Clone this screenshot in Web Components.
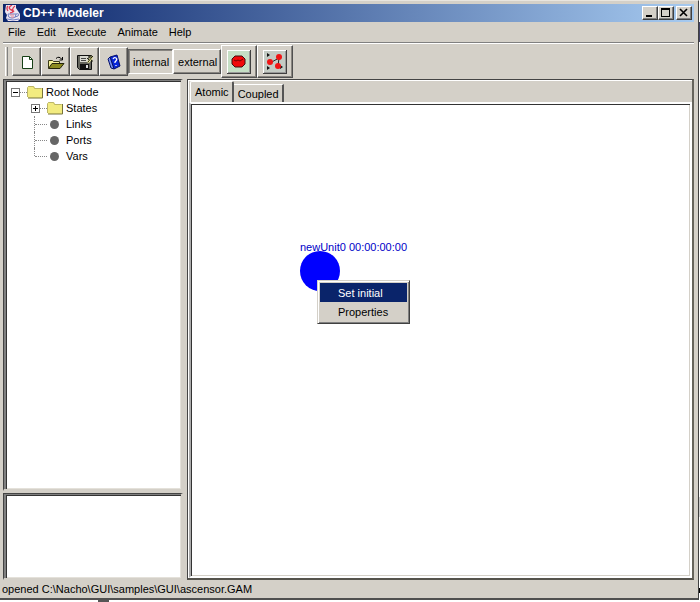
<!DOCTYPE html>
<html lang="en">
<head>
<meta charset="utf-8">
<title>CD++ Modeler</title>
<style>
html, body { margin: 0; height: 100%; }
body { background: linear-gradient(#555, #555) 98px 100% / 11px 2px no-repeat, linear-gradient(#446, #446) 100% 22px / 1px 20px no-repeat, linear-gradient(#ccc, #ccc) 100% 497px / 1px 20px no-repeat, linear-gradient(#000, #000) 100% 588px / 1px 5px no-repeat, #fff;
  color: #000; font: 11px/16px "Liberation Sans", Arial, sans-serif; overflow: hidden; }
</style>
</head>
<body>
<modeler-window>
  <title-bar slot="title">CD++ Modeler</title-bar>
  <menu-bar slot="menu"></menu-bar>
  <tool-bar slot="tools"></tool-bar>
  <node-tree slot="tree"></node-tree>
  <tab-view slot="main">
    <model-canvas></model-canvas>
  </tab-view>
  <span slot="status">opened C:\Nacho\GUI\samples\GUI\ascensor.GAM</span>
</modeler-window>
<script>
function define(name, markup) {
  const template = document.createElement('template');
  template.innerHTML = markup;
  customElements.define(name, class extends HTMLElement {
    constructor() {
      super();
      this.attachShadow({ mode: 'open' }).append(template.content.cloneNode(true));
    }
  });
}

define('modeler-window', `
<style>
:host { display: flex; flex-direction: column; box-sizing: border-box; height: calc(100vh - 2px); margin-right: 1px;
  padding: 3px 4px 0 3px; background: #d4d0c8; border-top: 1px solid #e8e5df; border-right: 1px solid #404040; border-bottom: 2px solid #505050; }
.split { flex: 1; min-height: 0; display: grid; grid-template-columns: 180px minmax(0, 1fr); column-gap: 4px; }
.left { display: grid; grid-template-rows: minmax(0, 1fr) 87px; row-gap: 2px; }
.well { box-sizing: border-box; background: #fff; border: solid; border-width: 1px 2px 2px 1px; border-color: #444 #d4d0c8 #d4d0c8 #444;
  box-shadow: inset 2px 1px #808080, inset 3px 2px #333, inset -1px -1px #e4e1da; overflow: hidden; }
.status { height: 17px; margin: 1px 0 0 -1px; line-height: 16px; }
</style>
<slot name="title"></slot><slot name="menu"></slot><slot name="tools"></slot>
<div class="split">
  <div class="left"><div class="well"><slot name="tree"></slot></div><div class="well"></div></div>
  <slot name="main"></slot>
</div>
<footer class="status"><slot name="status"></slot></footer>`);

define('title-bar', `
<style>
:host { display: flex; align-items: center; height: 18px; padding: 0 2px; color: #fff; background: linear-gradient(90deg, #0a246a, #a6caf0); }
h1 { flex: 1; margin: 0 0 0 2px; font: bold 12px/18px "Liberation Sans", Arial, sans-serif; }
button { box-sizing: border-box; width: 16px; height: 14px; padding: 0; background: #d4d0c8; border: 1px solid; border-color: #fff #404040 #404040 #fff;
  box-shadow: inset -1px -1px #808080; display: block; }
button:last-child { margin-left: 2px; }
svg { display: block; }
</style>
<svg width="16" height="16" viewBox="0 0 16 16" aria-hidden="true">
  <path d="M1 0h10v3l2 3 2 3v5l-2 2H3l-2-3 1-3-2-3z" fill="#eee6f0"/>
  <path d="M7 0q-5 3-1 5t-1 3M10 1q-4 3-1 6M3 1q-2 2 0 5M5 4l4 2" fill="none" stroke="#dc3c55" stroke-width="1.3"/>
  <path d="M3 9h8q0 4-3 4H6q-3 0-3-4M11 9q4-1 2 2l-3 1M2 14q6 2 12 0" fill="none" stroke="#7180c4"/>
  <path d="M5 10h4M6 12h3" stroke="#e08898"/>
</svg>
<h1><slot></slot></h1>
<button aria-label="Minimize"><svg width="14" height="12"><path d="M3 8h6v2H3z"/></svg></button>
<button aria-label="Maximize"><svg width="14" height="12"><path d="M2 1h9v9H2zM3 3v6h7V3z" fill-rule="evenodd"/></svg></button>
<button aria-label="Close"><svg width="14" height="12"><path d="M3 2l7 7M10 2L3 9" stroke="#000" stroke-width="1.6"/></svg></button>`);

define('menu-bar', `
<style>
:host { display: flex; align-items: flex-start; box-sizing: border-box; height: 22px; padding-left: 5px; gap: 11px; border-bottom: 1px solid #fff; box-shadow: inset 0 -1px #808080; }
button { border: 0; padding: 0; background: none; color: inherit; font: inherit; line-height: 20px; }
</style>
<button>File</button><button>Edit</button><button>Execute</button><button>Animate</button><button>Help</button>`);

define('tool-button', `
<style>
:host { display: block; }
button { box-sizing: border-box; width: 29px; height: 29px; padding: 0; display: flex; align-items: center; justify-content: center; color: #000; font: inherit;
  background: #d4d0c8; border: 1px solid; border-color: #fff #505050 #505050 #fff; box-shadow: inset -1px -1px #888580; }
:host([kind="text"]) button { width: auto; height: 25px; padding: 0 3px 0 4px; }
:host([pressed]) button { border-color: #606060 #fff #fff #606060; box-shadow: inset 1px 1px #888580; }
:host([kind="large"]) button { width: 36px; height: 33px; }
</style>
<button><slot></slot></button>`);

define('tool-bar', `
<style>
:host { display: flex; align-items: center; box-sizing: border-box; height: 35px; padding-left: 2px; }
.grip { width: 3px; height: 29px; margin-right: 4px; border-right: 1px solid #808080; border-left: 1px solid #fff; box-sizing: border-box; }
svg { display: block; }
</style>
<span class="grip"></span>
<tool-button><svg width="16" height="16" role="img" aria-label="New"><path d="M3.500 2.500h7l3 3v9h-10z" fill="#fff" stroke="#164016"/><path d="M10.500 2.500v3h3" fill="none" stroke="#164016"/></svg></tool-button>
<tool-button><svg width="18" height="16" role="img" aria-label="Open"><path d="M1.500 14V6.500h4l1 1h6V10" fill="#f5f19a" stroke="#3b3b18"/><path d="M1.500 14.500L5 9.500h12l-4 5z" fill="#8c8b20" stroke="#24240c"/><path d="M9 4.500q3-3 6 1M15.500 3v3h-3" fill="none" stroke="#000"/></svg></tool-button>
<tool-button><svg width="18" height="16" role="img" aria-label="Save"><path d="M1.500 1.500h14v14h-12l-2-2z" fill="#65655d" stroke="#111"/><path d="M4 2h8v6H4z" fill="#d8d8d0"/><path d="M5 4.500h5M5 6.500h5" stroke="#444"/><path d="M4 10h9v5H4z" fill="#111"/><path d="M10 11h2v3h-2z" fill="#ddd"/><path d="M11 8l4-6 2 2-4 5z" fill="#f0eda0"/><path d="M11 4l2 2M14 1v3M12 8l4-5M15 7h2M17 2l-2 2" stroke="#26260f"/></svg></tool-button>
<tool-button><svg width="16" height="16" role="img" aria-label="Help"><path d="M4 3l7-2 3 11-6 3z" fill="#0926d8" stroke="#05106c"/><path d="M4 3L2 5l3 9 3 1z" fill="#7791ef" stroke="#05106c"/><path d="M7 5q1-2 3-1t-1 4v1M10 11v1" fill="none" stroke="#fff" stroke-width="1.3"/></svg></tool-button>
<tool-button kind="text" pressed>internal</tool-button>
<tool-button kind="text">external</tool-button>
<tool-button kind="large"><svg width="24" height="24" role="img" aria-label="Atomic unit"><path d="M0 0h24v24H0z" fill="#404040"/><path d="M0 0h23v23H0z" fill="#fff"/><path d="M1 1h22v22H1z" fill="#999"/><path d="M1 1h21v21H1z" fill="#c5dfc5"/><path d="M8 6h7l3 3v5l-3 3H8l-3-3V9z" fill="#f00a0a" stroke="#401010"/><path d="M7 10l2 1 2-1 2 1 3-2" fill="none" stroke="#700"/></svg></tool-button>
<tool-button kind="large"><svg width="24" height="24" role="img" aria-label="Coupled model"><path d="M0 0h24v24H0z" fill="#404040"/><path d="M0 0h23v23H0z" fill="#fff"/><path d="M1 1h22v22H1z" fill="#999"/><path d="M1 1h21v21H1z" fill="#c4cbc4"/><path d="M7 13l9-5-1 8" fill="none" stroke="#222"/><path d="M4 3l3 2-3 2zM4 16l3 2-3 2zM17 15l3 2-3 2z" fill="#111"/><circle cx="7" cy="12" r="3" fill="#f01414"/><circle cx="16" cy="7" r="3" fill="#f01414"/><circle cx="15" cy="16" r="3" fill="#f01414"/></svg></tool-button>`);

define('node-tree', `
<style>
:host { display: block; padding: 4px 0 0 7px; }
ul { list-style: none; margin: 0; padding: 0; }
ul ul { margin-left: 20px; }
.row { display: flex; align-items: center; height: 16px; }
.toggle { box-sizing: border-box; width: 9px; height: 9px; padding: 0; border: 1px solid #777; background: #fff; display: block; }
.line { width: 7px; border-top: 1px dotted #888; }
.leaf .line { width: 12px; }
.leaf .stem { width: 4px; height: 16px; border-right: 1px dotted #888; box-sizing: border-box; }
.leaf:last-child .stem { height: 8px; align-self: flex-start; }
svg { display: block; }
.folder { margin-right: 3px; }
.dot { box-sizing: border-box; width: 9px; height: 9px; margin: 0 7px 0 3px; background: #666; border-radius: 50%; }
</style>
<ul>
  <li><div class="row"><button class="toggle" aria-label="Collapse Root Node"><svg width="7" height="7"><path d="M1 3h5v1H1z"/></svg></button><i class="line"></i><svg class="folder" width="16" height="14"><path d="M0 3h1V1h6l1 2h7v10H1V8H0z" fill="#f2eb80"/><path d="M1 13h14.500V3" fill="none" stroke="#77733c"/><path d="M.5 12V2.500l1-1h5l1 2h7" fill="none" stroke="#bbb568"/></svg>Root Node</div>
    <ul>
      <li><div class="row"><button class="toggle" aria-label="Expand States"><svg width="7" height="7"><path d="M1 3h2V1h1v2h2v1H4v2H3V4H1z"/></svg></button><i class="line"></i><svg class="folder" width="16" height="14"><path d="M0 3h1V1h6l1 2h7v10H1V8H0z" fill="#f2eb80"/><path d="M1 13h14.500V3" fill="none" stroke="#77733c"/><path d="M.5 12V2.500l1-1h5l1 2h7" fill="none" stroke="#bbb568"/></svg>States</div></li>
      <li class="row leaf"><i class="stem"></i><i class="line"></i><i class="dot"></i>Links</li>
      <li class="row leaf"><i class="stem"></i><i class="line"></i><i class="dot"></i>Ports</li>
      <li class="row leaf"><i class="stem"></i><i class="line"></i><i class="dot"></i>Vars</li>
    </ul>
  </li>
</ul>`);

define('tab-view', `
<style>
:host { display: flex; flex-direction: column; min-width: 0; box-sizing: border-box; border: solid; border-width: 1px 2px 2px 1px; border-color: #444 #66645c #55534c #444; box-shadow: inset 1px 1px #fff; padding: 1px 0 0 1px; }
nav { display: flex; align-items: flex-end; height: 21px; margin-left: 1px; }
button { box-sizing: border-box; height: 18px; padding: 0 3px 0 4px; border: 0; border-top: 1px solid #fff; border-right: 2px solid #555; background: #d4d0c8; color: #000; font: inherit; line-height: 18px; }
button[aria-selected="true"] { height: 21px; border-left: 1px solid #fff; border-radius: 2px 2px 0 0; line-height: 18px; }
.page { flex: 1; min-height: 0; border: solid; border-width: 2px; border-color: #fff #fff #fff #aaa; box-shadow: inset 1px 1px #333, inset -1px -1px #d4d0c8; background: #fff; }
</style>
<nav role="tablist"><button role="tab" aria-selected="true">Atomic</button><button role="tab" aria-selected="false">Coupled</button></nav>
<div class="page"><slot></slot></div>`);

define('context-menu', `
<style>
:host { display: block; box-sizing: border-box; width: 93px; padding: 2px; background: #d4d0c8; border: 1px solid; border-color: #d4d0c8 #404040 #404040 #d4d0c8; box-shadow: inset 1px 1px #fff, inset -1px -1px #808080; }
button { display: block; width: 100%; height: 19px; padding: 0 0 0 18px; border: 0; background: none; color: #000; font: inherit; text-align: left; }
button:first-child { background: #0a246a; color: #fff; }
</style>
<div role="menu"><button role="menuitem">Set initial</button><button role="menuitem">Properties</button></div>`);

define('model-canvas', `
<style>
:host { display: block; position: relative; height: 100%; }
.unit { position: absolute; left: 109px; top: 135px; z-index: 0; color: #0000c8; white-space: nowrap; }
.unit svg { position: absolute; left: 0; top: 12px; z-index: -1; }
context-menu { position: absolute; left: 126px; top: 176px; z-index: 1; }
</style>
<div class="unit">newUnit0 00:00:00:00<svg width="40" height="40" aria-hidden="true"><circle cx="20" cy="20" r="20" fill="#00f"/></svg></div>
<context-menu></context-menu>`);
</script>
</body>
</html>
